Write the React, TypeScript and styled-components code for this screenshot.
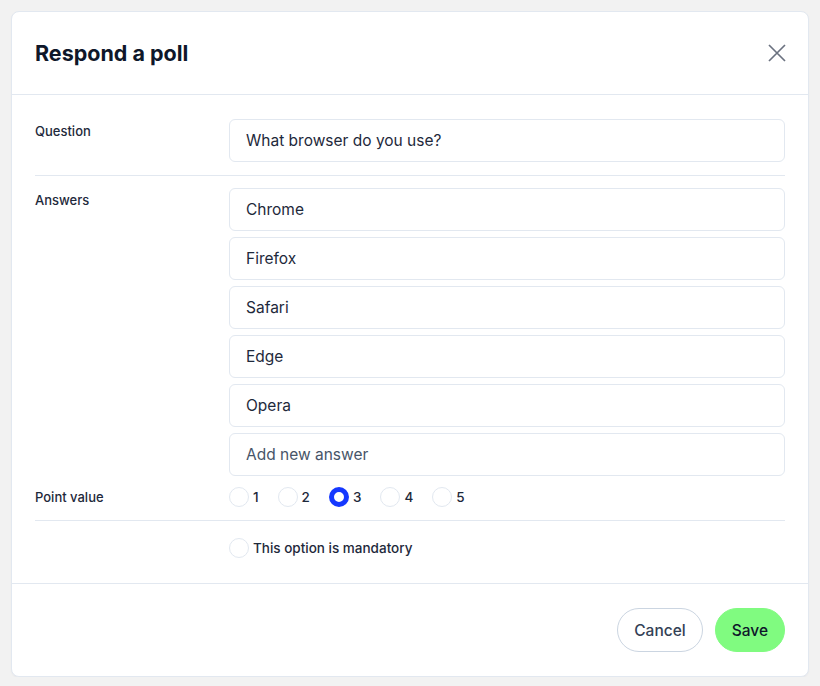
import styled, { createGlobalStyle } from 'styled-components';

const GlobalStyle = createGlobalStyle`
  * { box-sizing: border-box; }
  body {
    margin: 0;
    padding-top: 11px;
    background: #f2f2f2;
    font-family: 'Inter', 'Noto Sans', sans-serif;
    color: #1e293b;
  }
`;

const answers = ['Chrome', 'Firefox', 'Safari', 'Edge', 'Opera'];
const points = [1, 2, 3, 4, 5];

export default function App() {
  return (
    <>
      <GlobalStyle />
      <Card>
        <Header>
          <Title>Respond a poll</Title>
          <CloseButton aria-label="Close">
            <svg width="18" height="18" viewBox="0 0 18 18">
              <path d="M1 1L17 17M17 1L1 17" stroke="#6b7280" strokeWidth="1.7" fill="none" />
            </svg>
          </CloseButton>
        </Header>
        <Body>
          <Row>
            <Label>Question</Label>
            <Field>
              <TextBox>What browser do you use?</TextBox>
            </Field>
          </Row>
          <Line />
          <Row>
            <Label>Answers</Label>
            <Field>
              {answers.map((a) => (
                <TextBox key={a}>{a}</TextBox>
              ))}
              <TextBox placeholder>Add new answer</TextBox>
            </Field>
          </Row>
          <RadioRow>
            <Label $offset={0}>Point value</Label>
            <Options>
              {points.map((p) => (
                <Option key={p}>
                  <Radio $checked={p === 3} />
                  {p}
                </Option>
              ))}
            </Options>
          </RadioRow>
          <Line />
          <CheckRow>
            <Label $offset={0} />
            <Option>
              <Radio />
              This option is mandatory
            </Option>
          </CheckRow>
        </Body>
        <Footer>
          <Button>Cancel</Button>
          <Button $primary>Save</Button>
        </Footer>
      </Card>
    </>
  );
}

const Card = styled.div`
  margin: 0 11px;
  width: 798px;
  height: 666px;
  background: #fff;
  border: 1px solid #e2e8f0;
  border-radius: 8px;
  display: flex;
  flex-direction: column;
  box-shadow: 0 1px 2px rgba(15, 23, 42, 0.04);
`;

const Header = styled.div`
  height: 83px;
  padding: 0 22px 0 23px;
  display: flex;
  align-items: center;
  justify-content: space-between;
  border-bottom: 1px solid #e2e8f0;
`;

const Title = styled.h1`
  margin: 0;
  font-size: 21.5px;
  font-weight: 700;
  color: #0f172a;
`;

const CloseButton = styled.button`
  border: 0;
  background: none;
  padding: 0;
  display: flex;
  cursor: pointer;
`;

const Body = styled.div`
  padding: 24px 23px 0;
  flex: 1;
`;

const Row = styled.div`
  display: flex;
`;

const Label = styled.div<{ $offset?: number }>`
  width: 194px;
  flex-shrink: 0;
  padding-top: ${(p) => (p.$offset ?? 4)}px;
  font-size: 13px;
  font-weight: 500;
  color: #1e293b;
`;

const Field = styled.div`
  flex: 1;
  display: flex;
  flex-direction: column;
  gap: 6px;
`;

const TextBox = styled.div<{ placeholder?: boolean }>`
  height: 43px;
  border: 1px solid #e2e8f0;
  border-radius: 6px;
  padding: 0 16px;
  display: flex;
  align-items: center;
  font-size: 15.5px;
  color: ${(p) => (p.placeholder ? '#475569' : '#1e293b')};
`;

const Line = styled.div`
  height: 1px;
  background: #e2e8f0;
  margin: 13px 0 12px;
`;

const RadioRow = styled.div`
  display: flex;
  align-items: center;
  margin-top: 11px;
  margin-bottom: 1px;
`;

const CheckRow = styled.div`
  display: flex;
  align-items: center;
  margin-top: 17px;
`;

const Options = styled.div`
  display: flex;
  gap: 19px;
`;

const Option = styled.label`
  display: flex;
  align-items: center;
  gap: 4px;
  font-size: 13.5px;
  font-weight: 500;
  color: #1e293b;
`;

const Radio = styled.span<{ $checked?: boolean }>`
  width: 20px;
  height: 20px;
  border-radius: 50%;
  background: #fff;
  border: ${(p) => (p.$checked ? '5px solid #1538ff' : '1px solid #e2e8f0')};
`;

const Footer = styled.div`
  border-top: 1px solid #e2e8f0;
  padding: 24px 23px;
  display: flex;
  justify-content: flex-end;
  gap: 12px;
`;

const Button = styled.button<{ $primary?: boolean }>`
  height: 44px;
  padding: 0 16px;
  border-radius: 22px;
  font-family: inherit;
  font-size: 15.5px;
  font-weight: 500;
  color: ${(p) => (p.$primary ? '#0f172a' : '#334155')};
  background: ${(p) => (p.$primary ? '#80fb80' : '#fff')};
  border: 1px solid ${(p) => (p.$primary ? '#80fb80' : '#cbd5e1')};
  cursor: pointer;
`;
